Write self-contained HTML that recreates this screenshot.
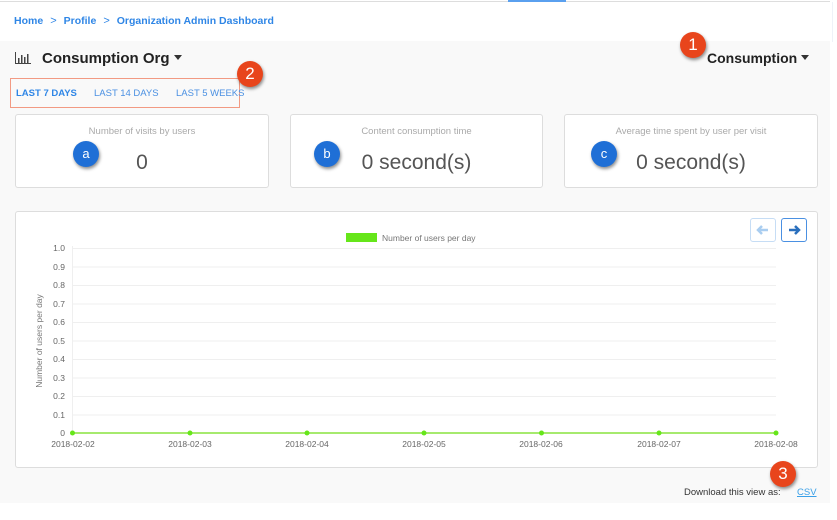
<!DOCTYPE html>
<html><head><meta charset="utf-8">
<style>
*{margin:0;padding:0;box-sizing:border-box}
body{width:837px;height:520px;background:#fff;font-family:"Liberation Sans",sans-serif;position:relative;overflow:hidden}
.abs{position:absolute}
.top{left:0;top:1px;width:830px;height:1px;background:#ddd}
.topb{left:508px;top:0;width:58px;height:2px;background:#5aa0ef}
.panel{left:0;top:41px;width:830px;height:462px;background:#f9f9f9}
.vline{left:832px;top:2px;width:1px;height:40px;background:#eef2f8}
.bc{left:14px;top:15px;font-size:10.5px;font-weight:bold;color:#2f86e6;white-space:nowrap}
.bc span.s{color:#2f86e6;margin:0 7px;font-weight:normal;font-size:11px}
.title{font-weight:bold;font-size:15px;color:#222;white-space:nowrap}
.tri{display:inline-block;width:0;height:0;border-left:4.5px solid transparent;border-right:4.5px solid transparent;border-top:5px solid #333;vertical-align:middle;margin-left:4px;margin-top:-3px}
.tabs{left:10px;top:78px;width:230px;height:30px;border:1px solid #f29a83}
.tab{top:88px;font-size:9.5px;color:#4a90e2;white-space:nowrap}
.card{background:#fff;border:1px solid #ddd;border-radius:3px;top:114px;height:74px}
.card .l{position:absolute;top:11px;width:100%;text-align:center;font-size:9.5px;color:#aaa}
.card .v{position:absolute;top:36px;width:100%;text-align:center;font-size:21px;color:#555}
.badge{width:26px;height:26px;border-radius:50%;background:#1f6fd6;color:#fff;font-size:13px;text-align:center;line-height:25px;box-shadow:1px 2px 3px rgba(0,0,0,.45)}
.ob{width:26px;height:26px;border-radius:50%;background:#e8451c;color:#fff;font-size:17px;text-align:center;line-height:26px;box-shadow:1px 2px 3px rgba(0,0,0,.45)}
.chart{left:15px;top:211px;width:803px;height:257px;background:#fff;border:1px solid #ddd;border-radius:3px}
.btn{width:26px;height:24px;border:1px solid #9cc6ef;border-radius:3px;background:#fff;top:218px}
</style></head><body>
<div class="abs top"></div><div class="abs topb"></div>
<div class="abs panel"></div>
<div class="abs vline"></div>
<div class="abs bc">Home<span class="s">&gt;</span>Profile<span class="s">&gt;</span>Organization Admin Dashboard</div>

<svg class="abs" style="left:15px;top:52px" width="17" height="13" viewBox="0 0 17 13"><g fill="#444"><rect x="0" y="0" width="1" height="12"/><rect x="0" y="11" width="16" height="1"/><rect x="3" y="6" width="1.5" height="5"/><rect x="6" y="3" width="1.5" height="8"/><rect x="9" y="5" width="1.5" height="6"/><rect x="12" y="2" width="1.5" height="9"/></g></svg>
<div class="abs title" style="left:42px;top:50px">Consumption Org<span class="tri"></span></div>
<div class="abs title" style="left:707px;top:50px;font-size:14px">Consumption<span class="tri"></span></div>
<div class="abs ob" style="left:680px;top:32px">1</div>

<div class="abs tabs"></div>
<div class="abs tab" style="left:16px;font-weight:bold;color:#2f86e6">LAST 7 DAYS</div>
<div class="abs tab" style="left:94px">LAST 14 DAYS</div>
<div class="abs tab" style="left:176px">LAST 5 WEEKS</div>
<div class="abs ob" style="left:237px;top:61px">2</div>

<div class="abs card" style="left:15px;width:254px"><div class="l">Number of visits by users</div><div class="v">0</div></div>
<div class="abs card" style="left:290px;width:253px"><div class="l">Content consumption time</div><div class="v">0 second(s)</div></div>
<div class="abs card" style="left:564px;width:254px"><div class="l">Average time spent by user per visit</div><div class="v">0 second(s)</div></div>
<div class="abs badge" style="left:73px;top:141px">a</div>
<div class="abs badge" style="left:314px;top:141px">b</div>
<div class="abs badge" style="left:591px;top:141px">c</div>

<div class="abs chart"></div>
<div class="abs btn" style="left:750px;border-color:#c6ddf5"><svg width="24" height="22" viewBox="0 0 24 22"><path d="M17 11H8M11 7l-4 4 4 4" stroke="#a9cdf0" stroke-width="2.5" fill="none"/></svg></div>
<div class="abs btn" style="left:781px;border-color:#4a90e2"><svg width="24" height="22" viewBox="0 0 24 22"><path d="M7 11h9M13 7l4 4-4 4" stroke="#2a6fbd" stroke-width="2.5" fill="none"/></svg></div>

<svg class="abs" style="left:0;top:0" width="837" height="520">
<rect x="346" y="233" width="31" height="9" fill="#66e61a"/>
<text x="382" y="241" font-size="8.5" fill="#777" font-family="Liberation Sans">Number of users per day</text>
<g stroke="#efefef" stroke-width="1">
<line x1="72" y1="248.5" x2="776" y2="248.5"/><line x1="72" y1="267" x2="776" y2="267"/><line x1="72" y1="285.5" x2="776" y2="285.5"/><line x1="72" y1="304" x2="776" y2="304"/><line x1="72" y1="322.5" x2="776" y2="322.5"/><line x1="72" y1="341" x2="776" y2="341"/><line x1="72" y1="359.5" x2="776" y2="359.5"/><line x1="72" y1="378" x2="776" y2="378"/><line x1="72" y1="396.5" x2="776" y2="396.5"/><line x1="72" y1="415" x2="776" y2="415"/>
<line x1="72.5" y1="246" x2="72.5" y2="433"/>
</g>
<g font-size="8.5" fill="#666" text-anchor="end" font-family="Liberation Sans">
<text x="65" y="251">1.0</text><text x="65" y="270">0.9</text><text x="65" y="288">0.8</text><text x="65" y="307">0.7</text><text x="65" y="325">0.6</text><text x="65" y="344">0.5</text><text x="65" y="362">0.4</text><text x="65" y="381">0.3</text><text x="65" y="399">0.2</text><text x="65" y="418">0.1</text><text x="65" y="436">0</text>
</g>
<text transform="translate(42,341) rotate(-90)" font-size="8.5" fill="#777" text-anchor="middle" font-family="Liberation Sans">Number of users per day</text>
<line x1="72" y1="433" x2="776" y2="433" stroke="#88e33f" stroke-width="1.5"/>
<g fill="#66e61a"><circle cx="72.5" cy="433" r="2.5"/><circle cx="190" cy="433" r="2.5"/><circle cx="307" cy="433" r="2.5"/><circle cx="424" cy="433" r="2.5"/><circle cx="541.5" cy="433" r="2.5"/><circle cx="659" cy="433" r="2.5"/><circle cx="776" cy="433" r="2.5"/></g>
<g font-size="8.5" fill="#666" text-anchor="middle" font-family="Liberation Sans">
<text x="73" y="447">2018-02-02</text><text x="190" y="447">2018-02-03</text><text x="307" y="447">2018-02-04</text><text x="424" y="447">2018-02-05</text><text x="541" y="447">2018-02-06</text><text x="659" y="447">2018-02-07</text><text x="776" y="447">2018-02-08</text>
</g>
</svg>

<div class="abs ob" style="left:770px;top:461px">3</div>
<div class="abs" style="left:684px;top:487px;font-size:9.5px;color:#333;white-space:nowrap">Download this view as:</div>
<div class="abs" style="left:797px;top:487px;font-size:9.5px;color:#3aa0e8;text-decoration:underline">CSV</div>
</body></html>
